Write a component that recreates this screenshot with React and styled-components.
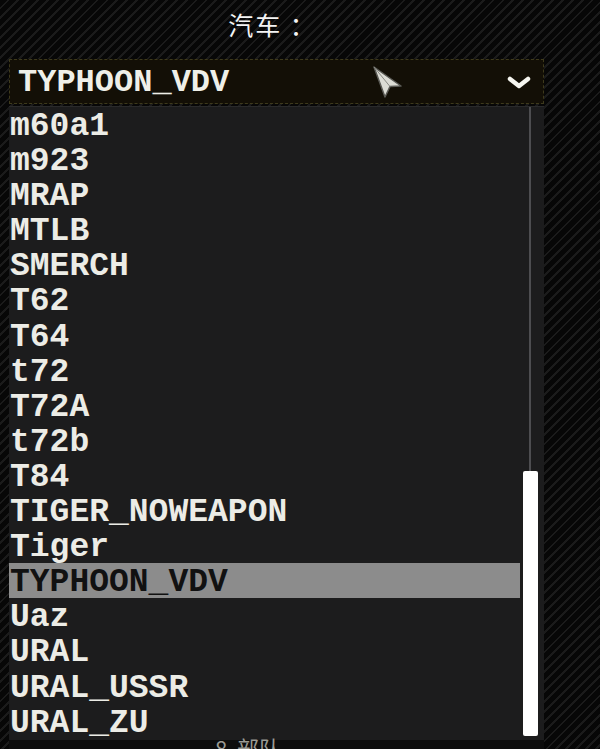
import React from "react";
import styled, { createGlobalStyle } from "styled-components";

const vehicles = [
  "m60a1",
  "m923",
  "MRAP",
  "MTLB",
  "SMERCH",
  "T62",
  "T64",
  "t72",
  "T72A",
  "t72b",
  "T84",
  "TIGER_NOWEAPON",
  "Tiger",
  "TYPHOON_VDV",
  "Uaz",
  "URAL",
  "URAL_USSR",
  "URAL_ZU",
];

const selected = "TYPHOON_VDV";

const App = () => {
  return (
    <Page>
      <GlobalStyle />
      <Title>汽车 ：</Title>
      <SelectBox>
        <SelectValue>{selected}</SelectValue>
        <Chevron width="24" height="14" viewBox="0 0 24 14">
          <polyline points="3,3 12,10 21,3" />
        </Chevron>
        <Cursor width="32" height="34" viewBox="0 0 32 34">
          <path d="M2 2 L29 21 L18 21.5 L13 32 Z" />
          <path d="M2 2 L18 21.5" className="fold" />
        </Cursor>
      </SelectBox>
      <DropList>
        <Options>
          {vehicles.map((name) => (
            <Option key={name} $active={name === selected}>
              {name}
            </Option>
          ))}
        </Options>
        <ScrollTrack>
          <TrackLine />
          <Thumb />
        </ScrollTrack>
      </DropList>
      <Footer>
        <FooterText>8&nbsp;&nbsp;部队</FooterText>
      </Footer>
    </Page>
  );
};

export default App;

const GlobalStyle = createGlobalStyle`
  html, body {
    margin: 0;
    padding: 0;
    overflow: hidden;
    background-color: #070707;
    background-image: repeating-linear-gradient(
      135deg,
      #070707 0px,
      #070707 5px,
      #1b1b1b 5px,
      #1b1b1b 7px
    );
  }
  * {
    box-sizing: border-box;
  }
`;

const Page = styled.div`
  width: 600px;
  height: 749px;
  padding: 0 56px 0 9px;
  display: flex;
  flex-direction: column;
  overflow: hidden;

  & > * {
    flex: none;
  }
`;

const Title = styled.div`
  height: 59px;
  display: flex;
  align-items: center;
  justify-content: center;
  padding: 0 8px 12px 0;
  color: #f4f4f4;
  font-family: "Noto Sans CJK SC", "Noto Sans", sans-serif;
  font-size: 25px;
  letter-spacing: 2px;
  white-space: pre;
`;

const SelectBox = styled.div`
  position: relative;
  height: 45px;
  margin-bottom: 2px;
  display: flex;
  align-items: center;
  padding: 2px 12px 0 8px;
  background: #130f06;
  border: 1px dashed #3e3a1c;
`;

const SelectValue = styled.span`
  flex: 1;
  color: #efefe8;
  font-family: "Liberation Mono", "Courier New", monospace;
  font-weight: bold;
  font-size: 32px;
`;

const Chevron = styled.svg`
  fill: none;
  stroke: #f6f6f0;
  stroke-width: 4.5;
  stroke-linecap: round;
  stroke-linejoin: round;
`;

const Cursor = styled.svg`
  position: absolute;
  left: 362px;
  top: 5px;
  path {
    fill: #dcdcd5;
    stroke: #5a5a55;
    stroke-width: 1.5;
    stroke-linejoin: round;
  }
  .fold {
    fill: none;
    stroke: #8a8a84;
    stroke-width: 1;
  }
`;

const DropList = styled.div`
  height: 634px;
  display: flex;
  background: #1c1c1d;
  border-top: 1px solid #2a2a2b;
  overflow: hidden;
`;

const Options = styled.div`
  width: 511px;
  display: flex;
  flex-direction: column;
`;

const Option = styled.div`
  flex: none;
  height: 35.1px;
  padding: 5px 0 0 1px;
  line-height: 30.1px;
  white-space: nowrap;
  font-family: "Liberation Mono", "Courier New", monospace;
  font-weight: bold;
  font-size: 33px;
  color: ${(p) => (p.$active ? "#111111" : "#ecece6")};
  background: ${(p) => (p.$active ? "#8c8c8c" : "transparent")};
`;

const ScrollTrack = styled.div`
  flex: 1;
  display: flex;
  flex-direction: column;
  align-items: center;
  padding: 0 4px 4px 0;
`;

const TrackLine = styled.div`
  flex: 1;
  width: 2px;
  background: #4d4d50;
`;

const Thumb = styled.div`
  width: 15px;
  height: 265px;
  background: #ffffff;
  border-radius: 2px;
`;

const Footer = styled.div`
  height: 20px;
  padding-left: 206px;
  background: #0d0d0d;
`;

const FooterText = styled.span`
  display: block;
  margin-top: -4px;
  color: #9a9a94;
  font-family: "Noto Sans CJK SC", "Noto Sans", sans-serif;
  font-size: 22px;
  line-height: 22px;
`;
